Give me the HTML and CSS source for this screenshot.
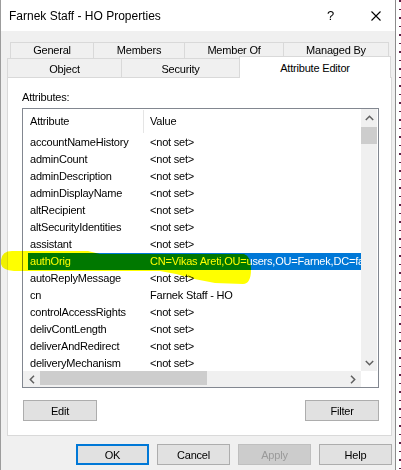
FILE: index.html
```html
<!DOCTYPE html>
<html>
<head>
<meta charset="utf-8">
<link rel="stylesheet" href="styles.css">
</head>
<body>
<div class="screen">
  <div class="window">
    <div class="titlebar">
      <span class="title">Farnek Staff - HO Properties</span>
      <span class="help">?</span>
      <span class="close"><svg width="10" height="10" viewBox="0 0 10 10"><path d="M0.5 0.5 L9.5 9.5 M9.5 0.5 L0.5 9.5" stroke="#000" stroke-width="1.1" fill="none"/></svg></span>
    </div>
    <div class="client">
      <div class="tabrow row1">
        <div class="tab t-general">General</div>
        <div class="tab t-members">Members</div>
        <div class="tab t-memberof">Member Of</div>
        <div class="tab t-managed">Managed By</div>
      </div>
      <div class="tabrow row2">
        <div class="tab t-object">Object</div>
        <div class="tab t-security">Security</div>
        <div class="tab t-attr selected">Attribute Editor</div>
      </div>
      <div class="panel">
        <div class="label">Attributes:</div>
        <div class="listbox">
          <div class="lv">
            <div class="lvhead">
              <div class="hcell hc1">Attribute</div>
              <div class="hcell hc2">Value</div>
            </div>
            <div class="lvrow"><div class="c1">accountNameHistory</div><div class="c2">&lt;not set&gt;</div></div>
            <div class="lvrow"><div class="c1">adminCount</div><div class="c2">&lt;not set&gt;</div></div>
            <div class="lvrow"><div class="c1">adminDescription</div><div class="c2">&lt;not set&gt;</div></div>
            <div class="lvrow"><div class="c1">adminDisplayName</div><div class="c2">&lt;not set&gt;</div></div>
            <div class="lvrow"><div class="c1">altRecipient</div><div class="c2">&lt;not set&gt;</div></div>
            <div class="lvrow"><div class="c1">altSecurityIdentities</div><div class="c2">&lt;not set&gt;</div></div>
            <div class="lvrow"><div class="c1">assistant</div><div class="c2">&lt;not set&gt;</div></div>
            <div class="lvrow sel"><div class="c1">authOrig</div><div class="c2">CN=Vikas Areti,OU=users,OU=Farnek,DC=farnek,DC=local</div></div>
            <div class="lvrow"><div class="c1">autoReplyMessage</div><div class="c2">&lt;not set&gt;</div></div>
            <div class="lvrow"><div class="c1">cn</div><div class="c2">Farnek Staff - HO</div></div>
            <div class="lvrow"><div class="c1">controlAccessRights</div><div class="c2">&lt;not set&gt;</div></div>
            <div class="lvrow"><div class="c1">delivContLength</div><div class="c2">&lt;not set&gt;</div></div>
            <div class="lvrow"><div class="c1">deliverAndRedirect</div><div class="c2">&lt;not set&gt;</div></div>
            <div class="lvrow"><div class="c1">deliveryMechanism</div><div class="c2">&lt;not set&gt;</div></div>
          </div>
          <div class="vscroll">
            <div class="arrowbox"><svg width="9" height="6" viewBox="0 0 9 6"><path d="M0.8 5 L4.5 1.3 L8.2 5" stroke="#606060" stroke-width="1.5" fill="none"/></svg></div>
            <div class="vthumb"></div>
            <div class="arrowbox down"><svg width="9" height="6" viewBox="0 0 9 6"><path d="M0.8 1 L4.5 4.7 L8.2 1" stroke="#606060" stroke-width="1.5" fill="none"/></svg></div>
          </div>
          <div class="hscroll">
            <div class="harrow"><svg width="6" height="9" viewBox="0 0 6 9"><path d="M5 0.8 L1.3 4.5 L5 8.2" stroke="#606060" stroke-width="1.5" fill="none"/></svg></div>
            <div class="hthumb"></div>
            <div class="harrow right"><svg width="6" height="9" viewBox="0 0 6 9"><path d="M1 0.8 L4.7 4.5 L1 8.2" stroke="#606060" stroke-width="1.5" fill="none"/></svg></div>
          </div>
          <div class="corner"></div>
        </div>
        <div class="panelbtns">
          <button class="btn edit">Edit</button>
          <button class="btn">Filter</button>
        </div>
      </div>
      <div class="dlgbtns">
        <button class="btn default">OK</button>
        <button class="btn">Cancel</button>
        <button class="btn disabled">Apply</button>
        <button class="btn">Help</button>
      </div>
    </div>
  </div>
  <div class="backdrop"><div class="dashes"></div></div>
  <svg class="marker" width="401" height="470" viewBox="0 0 401 470">
    <path d="M1 260 Q2 251 12 251 L88 251 L100 254 L244 254 Q251 256 251 269 Q251 284 243 284 L215 283 Q195 280 176 274 L160 271 L14 271 Q2 270 1 264 Z" fill="#ffff00"/>
  </svg>
</div>
</body>
</html>
```

FILE: styles.css
```css
* { box-sizing: border-box; }
html, body { margin: 0; padding: 0; }
body {
  width: 401px;
  height: 470px;
  overflow: hidden;
  background: #fff;
  font-family: "Liberation Sans", Arial, sans-serif;
  font-size: 11px;
  letter-spacing: -0.2px;
  color: #000;
}
.screen {
  position: relative;
  display: flex;
  width: 401px;
  height: 470px;
}
.window {
  width: 396px;
  height: 470px;
  border-left: 1px solid #9c9c9c;
  border-right: 1px solid #8c8c8c;
  background: #f0f0f0;
  display: flex;
  flex-direction: column;
}
.backdrop {
  flex: 1;
  background: #fff;
  display: flex;
  justify-content: flex-end;
}
.dashes {
  width: 2px;
  margin-right: 0;
  background: repeating-linear-gradient(to bottom, #5c1d43 0 2px, transparent 2px 9px, #5c1d43 9px 10px, transparent 10px 17px);
}
.titlebar {
  height: 31px;
  background: #fff;
  display: flex;
  align-items: center;
  padding-left: 8px;
  font-size: 12px;
  letter-spacing: 0;
}
.title { flex: 1; }
.help {
  width: 21px;
  text-align: center;
  margin-right: 16px;
  font-size: 13px;
}
.close {
  width: 38px;
  display: flex;
  justify-content: center;
  padding-top: 1px;
}
.client {
  flex: 1;
  padding-top: 11px;
}
.tabrow { display: flex; }
.row1 { height: 16px; margin-left: 9px; }
.row2 { height: 19px; margin-left: 6px; }
.tab {
  border-top: 1px solid #d9d9d9;
  border-left: 1px solid #d9d9d9;
  display: flex;
  justify-content: center;
  align-items: center;
  background: #f0f0f0;
}
.tab:last-child { border-right: 1px solid #d9d9d9; }
.row1 .tab { padding-bottom: 1px; }
.row2 .tab { padding-top: 2px; }
.t-general { width: 83px; }
.t-members { width: 91px; }
.t-memberof { width: 99px; }
.t-managed { width: 106px; }
.t-object { width: 114px; }
.t-security { width: 118px; }
.t-attr { width: 152px; }
.row2 .tab.selected {
  background: #fff;
  margin-top: -2px;
  margin-bottom: -1px;
  padding-top: 0;
  position: relative;
  z-index: 1;
}
.panel {
  margin-left: 6px;
  width: 385px;
  background: #fff;
  border: 1px solid #d9d9d9;
  padding: 12px 12px 14px 14px;
}
.label {
  line-height: 14px;
  height: 14px;
  margin-bottom: 4px;
}
.listbox {
  width: 357px;
  height: 280px;
  border: 1px solid #828790;
  display: grid;
  grid-template-columns: 338px 17px;
  grid-template-rows: 262px 16px;
  background: #fff;
}
.lv {
  overflow: hidden;
  white-space: nowrap;
}
.lvhead {
  height: 25px;
  display: flex;
  align-items: center;
}
.hcell { line-height: 23px; }
.hc1 {
  width: 121px;
  padding-left: 7px;
  border-right: 1px solid #e5e5e5;
}
.hc2 { padding-left: 6px; }
.lvrow {
  height: 17px;
  line-height: 17px;
  display: flex;
}
.c1 { width: 120px; padding-left: 7px; flex: none; }
.c2 { padding-left: 7px; overflow: hidden; flex: 1; }
.lvrow.sel {
  margin-left: 5px;
  background: #0078d7;
  color: #fff;
}
.lvrow.sel .c1 { width: 115px; padding-left: 2px; }
.vscroll {
  background: #f0f0f0;
  border-right: 1px solid #fff;
  display: flex;
  flex-direction: column;
}
.arrowbox {
  height: 17px;
  display: flex;
  align-items: center;
  justify-content: center;
  flex: none;
}
.arrowbox.down { margin-top: auto; }
.vthumb {
  height: 17px;
  margin-top: 1px;
  background: #cdcdcd;
}
.hscroll {
  background: #f0f0f0;
  display: flex;
  align-items: stretch;
}
.harrow {
  width: 17px;
  display: flex;
  align-items: center;
  justify-content: center;
  flex: none;
}
.harrow.right { margin-left: auto; }
.hthumb {
  width: 167px;
  background: #cdcdcd;
  margin-bottom: 2px;
}
.corner { background: #fff; }
.panelbtns {
  margin-top: 12px;
  width: 357px;
  display: flex;
  justify-content: space-between;
}
.btn {
  width: 74px;
  height: 21px;
  padding: 0;
  margin: 0;
  font-family: "Liberation Sans", Arial, sans-serif;
  font-size: 11px;
  letter-spacing: -0.2px;
  color: #000;
  background: #e1e1e1;
  border: 1px solid #adadad;
}
.edit { margin-left: 1px; }
.dlgbtns {
  margin-top: 8px;
  display: flex;
  justify-content: flex-end;
  gap: 8px;
  padding-right: 3px;
}
.dlgbtns .btn { width: 73px; }
.btn.default { border: 2px solid #0078d7; }
.btn.disabled {
  background: #cccccc;
  border-color: #bfbfbf;
  color: #9a9a9a;
}
.marker {
  position: absolute;
  left: 0;
  top: 0;
  pointer-events: none;
  mix-blend-mode: multiply;
}
```
